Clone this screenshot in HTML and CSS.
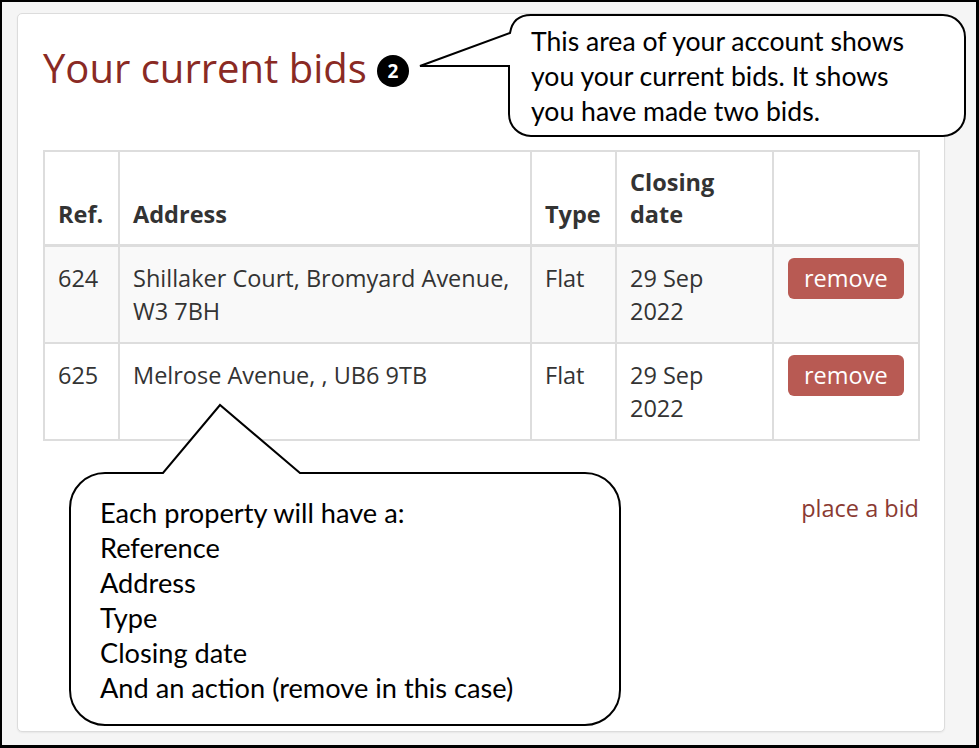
FILE: index.html
```html
<!DOCTYPE html>
<html lang="en">
<head>
<meta charset="utf-8">
<title>Your current bids</title>
<link rel="stylesheet" href="styles.css">
</head>
<body>
<div class="frame">
  <div class="card">
    <h2 class="title">Your current bids <span class="badge">2</span></h2>
    <table class="bids">
      <colgroup>
        <col class="c-ref"><col class="c-addr"><col class="c-type"><col class="c-date"><col class="c-act">
      </colgroup>
      <thead>
        <tr><th>Ref.</th><th>Address</th><th>Type</th><th>Closing date</th><th></th></tr>
      </thead>
      <tbody>
        <tr class="striped">
          <td>624</td><td>Shillaker Court, Bromyard Avenue, W3 7BH</td><td>Flat</td><td>29 Sep 2022</td>
          <td><button class="btn-remove">remove</button></td>
        </tr>
        <tr>
          <td>625</td><td>Melrose Avenue, , UB6 9TB</td><td>Flat</td><td>29 Sep 2022</td>
          <td><button class="btn-remove">remove</button></td>
        </tr>
      </tbody>
    </table>
    <div class="actions"><a class="link" href="#">place a bid</a></div>
  </div>

  <svg class="callouts" width="979" height="748" viewBox="0 0 979 748">
    <path d="M531 15 H943 A22 22 0 0 1 965 37 V114 A22 22 0 0 1 943 136 H531 A22 22 0 0 1 509 114 V66 H420 L510 33 Q513 15 531 15 Z" fill="#fff" stroke="#000" stroke-width="2"/>
    <path d="M105 473 H163 L220 405 L300 473 H585 A35 35 0 0 1 620 508 V690 A35 35 0 0 1 585 725 H105 A35 35 0 0 1 70 690 V508 A35 35 0 0 1 105 473 Z" fill="#fff" stroke="#000" stroke-width="2"/>
  </svg>
  <div class="note note-top">This area of your account shows<br>you your current bids. It shows<br>you have made two bids.</div>
  <div class="note note-bottom">Each property will have a:<br>Reference<br>Address<br>Type<br>Closing date<br>And an action (remove in this case)</div>
</div>
</body>
</html>
```
FILE: styles.css
```css
* { box-sizing: border-box; }
html, body { margin: 0; padding: 0; background: #fff; }
.frame {
  position: relative;
  width: 979px;
  height: 748px;
  border: 2px solid #000;
  border-right-width: 3px;
  border-bottom-width: 3px;
  background: #f5f5f5;
  padding: 11px 0 0 15px;
  font-family: "Open Sans", "Liberation Sans", sans-serif;
  color: #333;
}
.card {
  width: 928px;
  height: 719px;
  background: #fff;
  border: 1px solid #dcdcdc;
  border-radius: 5px;
  box-shadow: 0 1px 2px rgba(0,0,0,0.06);
  padding: 32px 25px 0 25px;
}
.title {
  margin: 0 0 60px 0;
  font-weight: 400;
  font-size: 40px;
  line-height: 44px;
  color: #8a2a24;
  display: flex;
  align-items: center;
  gap: 10px;
}
.badge {
  display: inline-flex;
  align-items: center;
  justify-content: center;
  width: 32px;
  height: 32px;
  border-radius: 50%;
  background: #000;
  color: #fff;
  font-size: 19px;
  font-weight: 700;
  line-height: 1;
  margin-top: 6px;
}
.bids {
  width: 875px;
  border-collapse: collapse;
  table-layout: fixed;
  font-size: 23.5px;
  line-height: 33px;
}
.c-ref { width: 75px; }
.c-addr { width: 412px; }
.c-type { width: 85px; }
.c-date { width: 157px; }
.c-act { width: 146px; }
.bids th, .bids td {
  border: 2px solid #ddd;
  padding: 14px 14px 14px 13px;
  text-align: left;
}
.bids th {
  vertical-align: bottom;
  font-weight: 700;
  line-height: 32px;
  border-bottom-width: 3px;
  padding-bottom: 14px;
}
.bids td { vertical-align: top; padding-top: 15px; padding-bottom: 14px; }
.bids tr.striped td { background: #f9f9f9; }
.btn-remove {
  display: inline-block;
  margin-top: -5px;
  margin-left: 1px;
  background: #b85a53;
  color: #fff;
  border: 0;
  border-radius: 6px;
  font-family: "Open Sans", "Liberation Sans", sans-serif;
  font-size: 23.5px;
  line-height: 41px;
  height: 41px;
  padding: 0 16px;
}
.actions {
  display: flex;
  justify-content: flex-end;
  margin-top: 52px;
}
.link {
  color: #8a3a32;
  text-decoration: none;
  font-size: 23.5px;
  line-height: 30px;
}
.callouts {
  position: absolute;
  top: -2px;
  left: -2px;
  pointer-events: none;
}
.note {
  position: absolute;
  font-family: Lato, "Noto Sans", sans-serif;
  font-size: 26.6px;
  line-height: 35px;
  color: #000;
}
.note-top { left: 529px; top: 22px; }
.note-bottom { left: 98px; top: 493px; font-size: 27.2px; }
```
